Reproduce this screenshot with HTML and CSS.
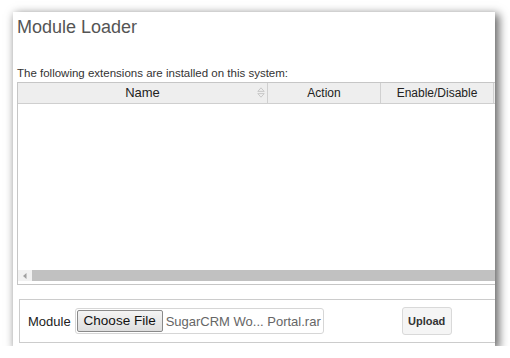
FILE: index.html
```html
<!DOCTYPE html>
<html>
<head>
<meta charset="utf-8">
<link rel="stylesheet" href="styles.css">
</head>
<body>
<div class="panel">
  <h1 class="title">Module Loader</h1>
  <p class="desc">The following extensions are installed on this system:</p>
  <div class="grid">
    <div class="head">
      <div class="col col-name">Name
        <svg class="sort" width="8" height="11" viewBox="0 0 8 11"><path d="M4 0.8 L7.2 4.4 H0.8 Z M4 10.2 L7.2 6.6 H0.8 Z" fill="none" stroke="#c8c8c8" stroke-width="1"/></svg>
      </div>
      <div class="col col-action">Action</div>
      <div class="col col-enable">Enable/Disable</div>
      <div class="col col-rest"></div>
    </div>
    <div class="body"></div>
    <div class="hscroll">
      <div class="arrow"><svg width="4" height="6" viewBox="0 0 4 6"><path d="M3.5 0 V6 L0 3 Z" fill="#a0a0a0"/></svg></div>
      <div class="track"></div>
    </div>
  </div>
  <form class="upload-box">
    <label class="label">Module</label>
    <div class="file">
      <span class="choose">Choose File</span>
      <span class="fname">SugarCRM Wo... Portal.rar</span>
    </div>
    <button type="button" class="upload">Upload</button>
  </form>
</div>
</body>
</html>
```
FILE: styles.css
```css
html, body {
  margin: 0;
  padding: 0;
  background: #ffffff;
}
body {
  font-family: "Liberation Sans", Arial, sans-serif;
  color: #333;
}
.panel {
  margin: 12px 0 0 13px;
  width: 482px;
  height: 334px;
  background: #fff;
  box-shadow: 3px 3px 9px 1px rgba(0, 0, 0, 0.6);
  overflow: hidden;
  padding: 0 0 0 4px;
  box-sizing: border-box;
  display: flex;
  flex-direction: column;
}
.title {
  margin: 3px 0 0 0;
  font-size: 18px;
  font-weight: normal;
  color: #555;
  line-height: 24px;
}
.desc {
  margin: 27px 0 0 0;
  font-size: 11.5px;
  line-height: 14px;
  color: #333;
}
.grid {
  margin-top: 2px;
  width: 520px;
  height: 203px;
  border: 1px solid #c6c6c6;
  border-right: none;
  box-sizing: border-box;
  display: flex;
  flex-direction: column;
}
.head {
  display: flex;
  height: 20px;
  background: #eeeeee;
  border-bottom: 1px solid #cfcfcf;
  font-size: 12.5px;
  line-height: 20px;
  color: #222;
}
.col {
  box-sizing: border-box;
  text-align: center;
  border-right: 1px solid #d0d0d0;
  position: relative;
}
.col-name { width: 250px; font-size: 13px; }
.col-action { width: 113px; font-size: 12px; }
.col-enable { width: 113px; font-size: 12px; }
.col-rest { flex: 1; border-right: none; }
.sort {
  position: absolute;
  right: 2px;
  top: 4px;
}
.body {
  flex: 1;
  background: #fff;
}
.hscroll {
  display: flex;
  height: 11px;
  margin-bottom: 3px;
}
.arrow {
  width: 14px;
  background: #f1f1f1;
  display: flex;
  align-items: center;
  justify-content: center;
}
.track {
  flex: 1;
  background: #c1c1c1;
}
.upload-box {
  margin: 14px 0 0 2px;
  width: 500px;
  height: 44px;
  border: 1px solid #cccccc;
  box-sizing: border-box;
  display: flex;
  align-items: center;
  padding-left: 8px;
}
.label {
  font-size: 13px;
  color: #222;
  margin-right: 4px;
}
.file {
  width: 249px;
  height: 26px;
  flex-shrink: 0;
  box-sizing: border-box;
  border: 1px solid #d6d6d6;
  border-radius: 3px;
  display: flex;
  align-items: center;
  padding-left: 1px;
  overflow: hidden;
}
.choose {
  flex: 0 0 86px;
  height: 22px;
  box-sizing: border-box;
  border: 1px solid #8a8a8a;
  border-radius: 2px;
  background: linear-gradient(#f4f4f4, #dedede);
  font-size: 13.5px;
  line-height: 20px;
  text-align: center;
  color: #111;
  white-space: nowrap;
}
.fname {
  margin-left: 3px;
  font-size: 13px;
  color: #666;
  white-space: nowrap;
}
.upload {
  flex-shrink: 0;
  margin-left: 78px;
  width: 50px;
  height: 28px;
  border: 1px solid #d9d9d9;
  border-radius: 3px;
  background: #f5f5f5;
  font-family: "Liberation Sans", Arial, sans-serif;
  font-weight: bold;
  font-size: 11px;
  color: #333;
  padding: 0;
}
```
